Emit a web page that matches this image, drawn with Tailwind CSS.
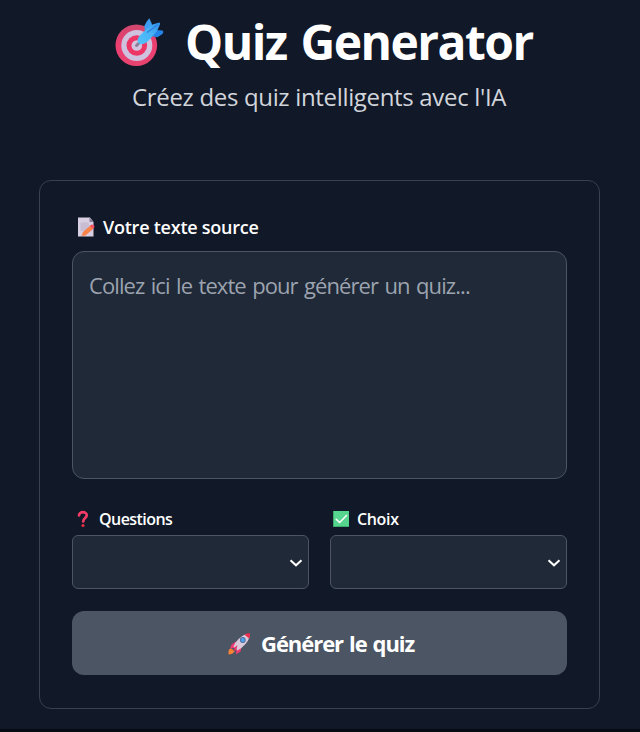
<!DOCTYPE html>
<html lang="fr">
<head>
<meta charset="utf-8">
<title>Quiz Generator</title>
<script src="https://cdn.jsdelivr.net/npm/@tailwindcss/browser@4"></script>
</head>
<body class="h-[732px] overflow-hidden bg-[#070b14] font-['Open_Sans','Noto_Sans',sans-serif] text-white">
<div class="h-[729px] bg-[#111827]">
  <header class="h-[180px] pt-[12px]">
    <h1 class="flex h-[60px] items-center pl-[115px] whitespace-nowrap">
      <svg class="mr-[21px] h-[49px] w-[49px] shrink-0" viewBox="0 0 49 49">
        <defs>
          <linearGradient id="ring" x1="0" y1="0" x2="0" y2="1"><stop offset="0" stop-color="#cf476f"/><stop offset=".5" stop-color="#ed3e70"/><stop offset="1" stop-color="#e74470"/></linearGradient>
          <linearGradient id="dart" x1="0" y1="1" x2="1" y2="0"><stop offset="0" stop-color="#51c4fa"/><stop offset=".55" stop-color="#48b2f6"/><stop offset="1" stop-color="#2f8eea"/></linearGradient>
        </defs>
        <circle cx="21.300" cy="27.300" r="20.800" fill="url(#ring)"/>
        <circle cx="21.800" cy="27.500" r="15.500" fill="#cfc2df"/>
        <circle cx="21.800" cy="27.500" r="10.300" fill="#ed3566"/>
        <circle cx="21.800" cy="27.500" r="5.300" fill="#d3c5df"/>
        <path d="M21.500 27.500 26 23" stroke="#8e7f99" stroke-width="3" stroke-linecap="round"/>
        <path d="M30 13 29.300 8Q31 4 34.300 .3L36.500 5 38 10 33 15Z" fill="#3d9cf2"/>
        <path d="M36 18 41 12 47.500 12.500Q49 13.500 47.500 16L42.500 19.200Z" fill="#2484e8"/>
        <path d="M24 18.500Q29 13 36 7L44 4.500Q45.500 4.500 45 6.500L42 13 36.500 19.500 31.500 24.500Q27 27.500 24 25.500 21 22.500 24 18.500Z" fill="url(#dart)"/>
        <path d="M32 14.500 42.500 7" stroke="#2c7fde" stroke-width="1.200"/>
      </svg>
      <span class="text-[48px] leading-[60px] font-bold tracking-[-1.55px] [word-spacing:3px]">Quiz Generator</span>
    </h1>
    <p class="mt-[8px] pl-[132px] text-[24px] leading-[34px] tracking-[-0.33px] whitespace-nowrap text-[#d1d5db]">Créez des quiz intelligents avec l'IA</p>
  </header>

  <main class="ml-[39px] flex h-[529px] w-[561px] flex-col rounded-[12px] border border-[#374151] px-[32px] pt-[32px]">
    <label class="flex h-[28px] items-center pl-[6px] text-[18px] leading-[28px] font-semibold whitespace-nowrap">
      <svg class="mr-[7px] h-[20px] w-[18px] shrink-0" viewBox="0 0 18 20">
        <path d="M0 0.500H12L15.500 5V19.500H0Z" fill="#d8cfe2"/>
        <path d="M2.500 5.500H10.500V8H14V14H2.500Z" fill="#c8bdd3"/>
        <path d="M11.500 0.500 15.500 5H11.500Z" fill="#877c96"/>
        <path d="M3.500 19 5 15 12.500 8.500 15.500 11.500 7.500 18.500Z" fill="#fb8347"/>
        <path d="M12 9 13.500 7.500Q16.500 7.500 16.500 10L15 12Z" fill="#f45164"/>
      </svg>
      <span class="tracking-[-0.24px]">Votre texte source</span>
    </label>
    <textarea placeholder="Collez ici le texte pour générer un quiz..." class="mt-[10px] h-[228px] w-[495px] shrink-0 resize-none overflow-hidden rounded-[12px] border border-[#4b5563] bg-[#1f2937] px-[16px] py-[16px] text-[22px] leading-[34px] tracking-[-0.92px] [word-spacing:1.6px] placeholder:text-[#9ca3af]"></textarea>

    <div class="mt-[28px] grid grid-cols-2 gap-x-[21px]">
      <div>
        <label class="flex h-[23px] items-center pl-[4px] text-[16px] font-semibold">
          <svg class="mr-[8px] h-[18px] w-[15px] shrink-0" viewBox="0 0 15 18">
            <path d="M3 5.500C3 1 11 1 10.700 5.500 10.400 8.500 7.500 7.500 7.200 11.500" fill="none" stroke="#f23c67" stroke-width="2.700" stroke-linecap="round"/>
            <circle cx="7" cy="15.500" r="1.600" fill="#eb2c47"/>
          </svg>
          <span class="tracking-[-0.55px]">Questions</span>
        </label>
        <div class="mt-[5px] flex h-[54px] items-center justify-end rounded-[6px] border border-[#4b5563] bg-[#1f2937] pt-[1px] pr-[5px]">
          <svg class="h-[8px] w-[14px]" viewBox="0 0 14 8"><path d="M1.500 1.200 7 6.300 12.500 1.200" fill="none" stroke="white" stroke-width="2"/></svg>
        </div>
      </div>
      <div>
        <label class="flex h-[23px] items-center pl-[3px] text-[16px] font-semibold">
          <svg class="mr-[8px] h-[16px] w-[16px] shrink-0" viewBox="0 0 16 16">
            <path d="M0 0H16V16H0Z" fill="#55d58d"/><path d="M0 15.500H16M.5 0V16" stroke="#3dac70"/>
            <path d="M3.300 8.300 6.700 11.500 13.500 4.500" fill="none" stroke="white" stroke-width="1.600" stroke-linecap="round"/>
          </svg>
          <span class="tracking-[-0.35px]">Choix</span>
        </label>
        <div class="mt-[5px] flex h-[54px] items-center justify-end rounded-[6px] border border-[#4b5563] bg-[#1f2937] pt-[1px] pr-[5px]">
          <svg class="h-[8px] w-[14px]" viewBox="0 0 14 8"><path d="M1.500 1.200 7 6.300 12.500 1.200" fill="none" stroke="white" stroke-width="2"/></svg>
        </div>
      </div>
    </div>

    <button class="mt-[22px] flex h-[64px] w-[495px] shrink-0 items-center rounded-[12px] bg-[#4b5563] pt-[1px] pl-[156px] text-[22px] font-bold whitespace-nowrap">
      <svg class="mr-[10px] h-[22px] w-[23px] shrink-0" viewBox="0 0 23 22">
        <path d="M8 8.500 3.500 11.500 2 15.500 7 15 8.500 16 8 21.500 12.500 18.500 14 13Z" fill="#ef3b72"/>
        <path d="M5.500 13.500Q9 5 18 1L21.500 4Q19 12 9.500 17.500Z" fill="#d9cbdc"/>
        <path d="M16.500 1.700Q19 0 22 .3 22.500 3 21 5.500Z" fill="#ed2f50"/>
        <circle cx="14.800" cy="7" r="2.900" fill="#526c9d"/><circle cx="14.800" cy="7" r="1.900" fill="#49a4ed"/>
        <path d="M6.500 14.500 9.500 12 8.500 16.500 6 19Z" fill="#e93970"/>
        <path d="M3.500 15.500 6.500 18.500Q4.500 21.500 .5 21.500 0 17.500 1.500 16Z" fill="#f78335"/>
      </svg>
      <span class="tracking-[-1.05px] [word-spacing:1.3px]">Générer le quiz</span>
    </button>
  </main>
</div>
</body>
</html>
